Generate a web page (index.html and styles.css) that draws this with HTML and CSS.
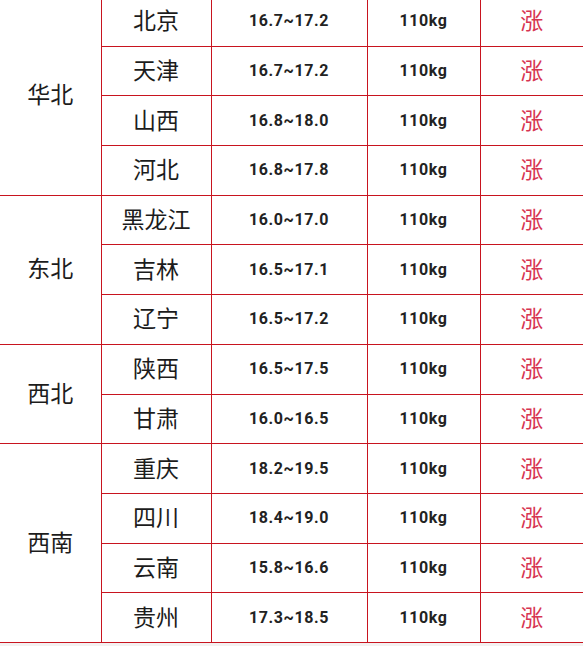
FILE: index.html
```html
<!DOCTYPE html>
<html lang="zh">
<head>
<meta charset="utf-8">
<link rel="stylesheet" href="styles.css">
</head>
<body>
<table class="price-table">
  <colgroup>
    <col class="c-region"><col class="c-city"><col class="c-price"><col class="c-weight"><col class="c-trend">
  </colgroup>
  <tbody>
    <tr><td class="region" rowspan="4">华北</td><td class="city">北京</td><td class="num">16.7~17.2</td><td class="num">110kg</td><td class="trend">涨</td></tr>
    <tr><td class="city">天津</td><td class="num">16.7~17.2</td><td class="num">110kg</td><td class="trend">涨</td></tr>
    <tr><td class="city">山西</td><td class="num">16.8~18.0</td><td class="num">110kg</td><td class="trend">涨</td></tr>
    <tr><td class="city">河北</td><td class="num">16.8~17.8</td><td class="num">110kg</td><td class="trend">涨</td></tr>
    <tr><td class="region" rowspan="3">东北</td><td class="city">黑龙江</td><td class="num">16.0~17.0</td><td class="num">110kg</td><td class="trend">涨</td></tr>
    <tr><td class="city">吉林</td><td class="num">16.5~17.1</td><td class="num">110kg</td><td class="trend">涨</td></tr>
    <tr><td class="city">辽宁</td><td class="num">16.5~17.2</td><td class="num">110kg</td><td class="trend">涨</td></tr>
    <tr><td class="region" rowspan="2">西北</td><td class="city">陕西</td><td class="num">16.5~17.5</td><td class="num">110kg</td><td class="trend">涨</td></tr>
    <tr><td class="city">甘肃</td><td class="num">16.0~16.5</td><td class="num">110kg</td><td class="trend">涨</td></tr>
    <tr><td class="region" rowspan="4">西南</td><td class="city">重庆</td><td class="num">18.2~19.5</td><td class="num">110kg</td><td class="trend">涨</td></tr>
    <tr><td class="city">四川</td><td class="num">18.4~19.0</td><td class="num">110kg</td><td class="trend">涨</td></tr>
    <tr><td class="city">云南</td><td class="num">15.8~16.6</td><td class="num">110kg</td><td class="trend">涨</td></tr>
    <tr><td class="city">贵州</td><td class="num">17.3~18.5</td><td class="num">110kg</td><td class="trend">涨</td></tr>
  </tbody>
</table>
</body>
</html>
```

FILE: styles.css
```css
html, body {
  margin: 0;
  padding: 0;
  background: #f3f1f1;
}
body {
  width: 583px;
  height: 646px;
  overflow: hidden;
  font-family: "Noto Sans CJK SC", sans-serif;
  color: #1c1c1c;
}
.price-table {
  width: 583px;
  margin-top: -4px;
  border-collapse: collapse;
  table-layout: fixed;
  background: #fff;
}
.c-region { width: 101px; }
.c-city { width: 110px; }
.c-price { width: 156px; }
.c-weight { width: 113px; }
.c-trend { width: 103px; }
.price-table tr { height: 49.7px; }
.price-table td {
  border: 1.6px solid #c8141f;
  padding: 0;
  text-align: center;
  vertical-align: middle;
  line-height: 1;
}
.price-table tr td:first-child { border-left: none; }
.price-table tr td:last-child { border-right: none; }
.price-table td.region {
  font-size: 23px;
  padding-bottom: 4px;
}
.price-table td.city {
  font-size: 23px;
  padding-bottom: 3px;
}
.price-table td.num {
  font-family: Roboto, "Liberation Sans", sans-serif;
  font-weight: bold;
  font-size: 16px;
  letter-spacing: 0.6px;
  color: #222;
}
.price-table td.trend {
  font-size: 23px;
  padding-bottom: 3px;
  color: #d73552;
}
```
